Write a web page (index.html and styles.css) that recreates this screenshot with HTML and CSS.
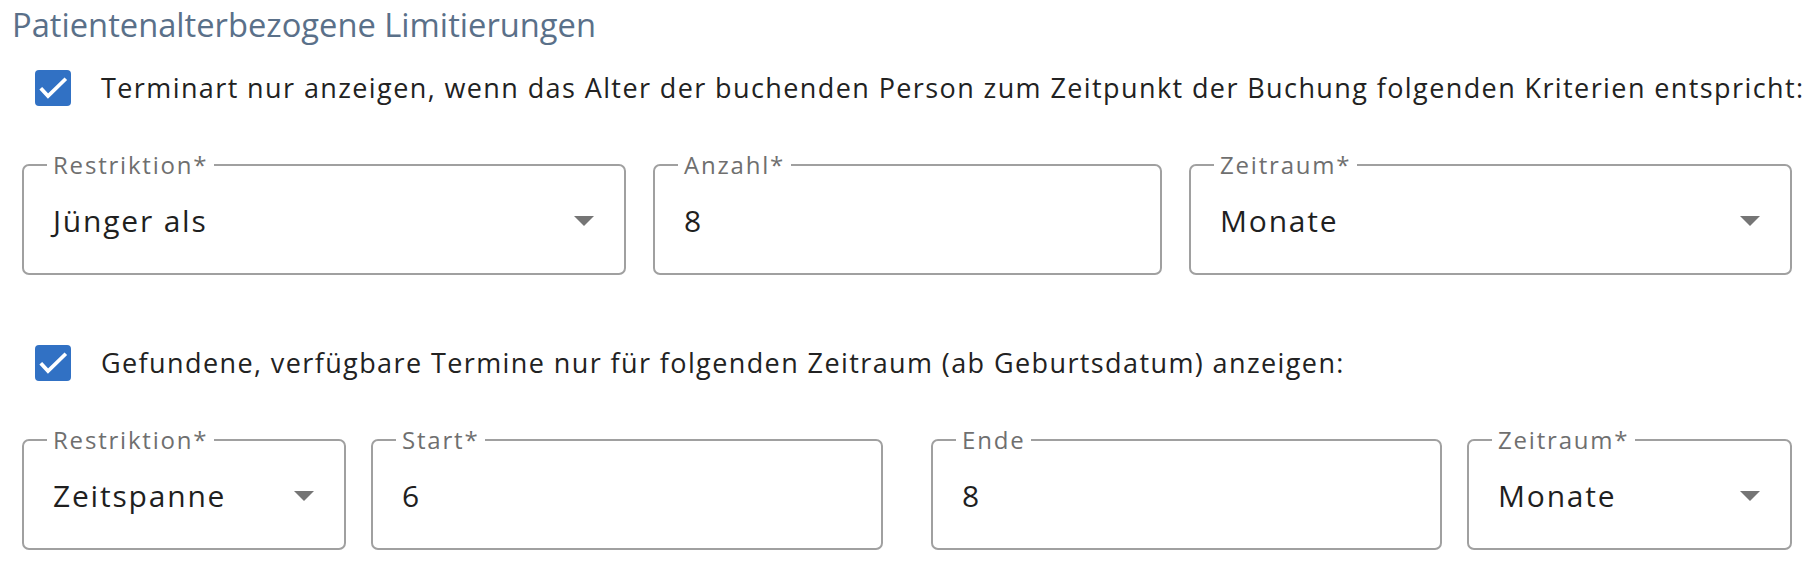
FILE: index.html
```html
<!DOCTYPE html>
<html lang="de">
<head>
<meta charset="utf-8">
<title>Patientenalterbezogene Limitierungen</title>
<link rel="stylesheet" href="styles.css">
</head>
<body>
<div class="page">
  <h2 class="title">Patientenalterbezogene Limitierungen</h2>

  <label class="check-row first">
    <span class="checkbox"><svg viewBox="0 0 36 36" width="36" height="36"><polyline points="7,19.5 13,26 29.5,10" fill="none" stroke="#fff" stroke-width="3.7" stroke-linecap="square" stroke-linejoin="miter"/></svg></span>
    <span class="check-text">Terminart nur anzeigen, wenn das Alter der buchenden Person zum Zeitpunkt der Buchung folgenden Kriterien entspricht:</span>
  </label>

  <div class="fields row-one">
    <fieldset class="field">
      <legend>Restriktion*</legend>
      <div class="field-body"><span class="value">Jünger als</span><span class="arrow"></span></div>
    </fieldset>
    <fieldset class="field">
      <legend>Anzahl*</legend>
      <div class="field-body"><span class="value">8</span></div>
    </fieldset>
    <fieldset class="field">
      <legend>Zeitraum*</legend>
      <div class="field-body"><span class="value">Monate</span><span class="arrow"></span></div>
    </fieldset>
  </div>

  <label class="check-row second">
    <span class="checkbox"><svg viewBox="0 0 36 36" width="36" height="36"><polyline points="7,19.5 13,26 29.5,10" fill="none" stroke="#fff" stroke-width="3.7" stroke-linecap="square" stroke-linejoin="miter"/></svg></span>
    <span class="check-text">Gefundene, verfügbare Termine nur für folgenden Zeitraum (ab Geburtsdatum) anzeigen:</span>
  </label>

  <div class="fields row-two">
    <fieldset class="field">
      <legend>Restriktion*</legend>
      <div class="field-body"><span class="value">Zeitspanne</span><span class="arrow"></span></div>
    </fieldset>
    <fieldset class="field">
      <legend>Start*</legend>
      <div class="field-body"><span class="value">6</span></div>
    </fieldset>
    <fieldset class="field gap-left">
      <legend>Ende</legend>
      <div class="field-body"><span class="value">8</span></div>
    </fieldset>
    <fieldset class="field">
      <legend>Zeitraum*</legend>
      <div class="field-body"><span class="value">Monate</span><span class="arrow"></span></div>
    </fieldset>
  </div>
</div>
</body>
</html>
```

FILE: styles.css
```css
html, body {
  margin: 0;
  padding: 0;
  background: #ffffff;
}

body {
  font-family: "Open Sans", "Noto Sans", "Liberation Sans", sans-serif;
  color: #222222;
}

.page {
  padding: 5px 22px 0 12px;
}

.title {
  margin: 0;
  font-size: 32.7px;
  line-height: 40px;
  font-weight: 400;
  color: #5a7089;
}

.check-row {
  display: flex;
  align-items: center;
  gap: 30px;
  height: 40px;
  padding-left: 23px;
}

.check-row.first {
  margin-top: 23px;
}

.check-row.second {
  margin-top: 68px;
}

.checkbox {
  width: 36px;
  height: 36px;
  border-radius: 4px;
  background: #3171c4;
  display: flex;
  flex: none;
}

.check-text {
  font-size: 27px;
  line-height: 40px;
  letter-spacing: 1.4px;
  white-space: nowrap;
  color: #222222;
}

.fields {
  display: grid;
  margin-left: 10px;
}

.row-one {
  margin-top: 43px;
  grid-template-columns: 604px 509px 603px;
  column-gap: 27px;
}

.row-two {
  margin-top: 43px;
  grid-template-columns: 324px 512px 534px 325px;
  column-gap: 25px;
}

.row-two .gap-left {
  margin-left: 23px;
}

.field {
  margin: 0;
  min-width: 0;
  border: 2px solid #a0a0a0;
  border-radius: 7px;
  padding: 0 30px 0 23px;
}

.field legend {
  padding: 0 6px;
  font-size: 24px;
  line-height: 28px;
  color: #6f6f6f;
  letter-spacing: 1.8px;
}

.field-body {
  display: flex;
  align-items: center;
  justify-content: space-between;
  height: 48px;
  padding: 18px 0 28px 6px;
}

.value {
  font-size: 30px;
  line-height: 48px;
  letter-spacing: 1.8px;
  color: #1f1f1f;
}

.arrow {
  width: 0;
  height: 0;
  border-left: 10px solid transparent;
  border-right: 10px solid transparent;
  border-top: 10px solid #757575;
  flex: none;
}
```
